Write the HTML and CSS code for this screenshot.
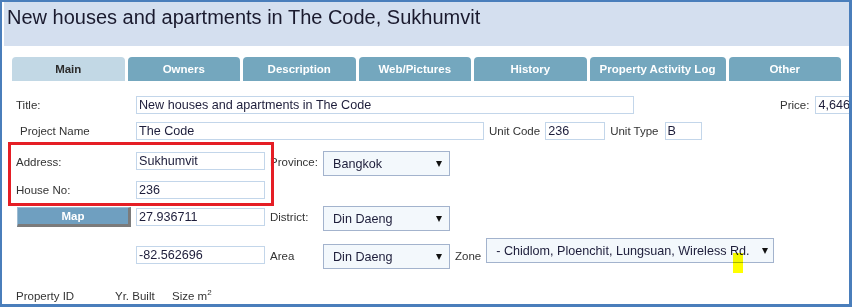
FILE: index.html
```html
<!DOCTYPE html>
<html lang="en">
<head>
    <meta charset="UTF-8">
    <title>New houses and apartments in The Code, Sukhumvit</title>
    <link rel="stylesheet" href="styles.css">
</head>
<body>
    <div class="frame">
        <header class="page-head">
            <h1>New houses and apartments in The Code, Sukhumvit</h1>
        </header>

        <nav class="tabs">
            <div class="tab active">Main</div>
            <div class="tab">Owners</div>
            <div class="tab">Description</div>
            <div class="tab">Web/Pictures</div>
            <div class="tab">History</div>
            <div class="tab wide">Property Activity Log</div>
            <div class="tab">Other</div>
        </nav>

        <section class="form">
            <div class="row row-title">
                <span class="label">Title:</span>
                <input class="field title-field" type="text" value="New houses and apartments in The Code">
                <span class="price-label">Price:</span>
                <input class="field price-field" type="text" value="4,646,000">
            </div>

            <div class="row row-project">
                <span class="label project-label">Project Name</span>
                <input class="field project-field" type="text" value="The Code">
                <span class="inline-label">Unit Code</span>
                <input class="field unit-code" type="text" value="236">
                <span class="inline-label unit-type-label">Unit Type</span>
                <input class="field unit-type" type="text" value="B">
            </div>

            <div class="row row-address">
                <span class="label">Address:</span>
                <input class="field short-field" type="text" value="Sukhumvit">
                <span class="side-label">Province:</span>
                <div class="select"><span>Bangkok</span><i class="arrow"></i></div>
            </div>

            <div class="row row-house">
                <span class="label">House No:</span>
                <input class="field short-field" type="text" value="236">
            </div>

            <div class="row row-map">
                <button class="map-btn">Map</button>
                <input class="field short-field" type="text" value="27.936711">
                <span class="side-label">District:</span>
                <div class="select"><span>Din Daeng</span><i class="arrow"></i></div>
            </div>

            <div class="row row-area">
                <span class="label"></span>
                <input class="field short-field" type="text" value="-82.562696">
                <span class="side-label">Area</span>
                <div class="select"><span>Din Daeng</span><i class="arrow"></i></div>
                <span class="zone-label">Zone</span>
                <div class="select zone-select"><span>- Chidlom, Ploenchit, Lungsuan, Wireless Rd.</span><i class="arrow"></i></div>
            </div>

            <div class="row row-info">
                <span class="info-id">Property ID</span>
                <span class="info-built">Yr. Built</span>
                <span class="info-size">Size m<sup>2</sup></span>
            </div>
        </section>

        <div class="mark-box"></div>
        <div class="mark-yellow"></div>
    </div>
</body>
</html>
```

FILE: styles.css
```css
body {
    margin: 0;
    padding: 0;
    background-color: #ffffff;
    font-family: Arial, 'Liberation Sans', sans-serif;
}
.frame {
    position: relative;
    width: 852px;
    height: 307px;
    box-sizing: border-box;
    border: 2px solid #4a7ebb;
    border-right-width: 3px;
    border-bottom-width: 3px;
    overflow: hidden;
}
.page-head {
    margin-left: 2px;
    height: 44px;
    background-color: #d4dfef;
}
.page-head h1 {
    margin: 0;
    padding: 4px 0 0 3px;
    font-size: 20px;
    font-weight: normal;
    line-height: 23px;
    color: #1a1a2e;
}
.tabs {
    display: flex;
    gap: 3px;
    margin: 11px 0 0 10px;
}
.tab {
    flex-shrink: 0;
    width: 112.5px;
    height: 24px;
    line-height: 24px;
    text-align: center;
    font-size: 11.5px;
    font-weight: bold;
    color: #ffffff;
    background-color: #74a7be;
    border-radius: 4px 4px 0 0;
}
.tab.active {
    background-color: #c2d8e5;
    color: #2b2b2b;
}
.tab.wide {
    width: 136px;
}
.form {
    padding-left: 14px;
}
.row {
    display: flex;
    align-items: flex-start;
    white-space: nowrap;
}
.label,
.inline-label,
.side-label,
.price-label,
.zone-label,
.row-info span {
    flex-shrink: 0;
    font-size: 11.5px;
    color: #333333;
    line-height: 18px;
}
.label {
    width: 120px;
}
.field {
    flex-shrink: 0;
    box-sizing: border-box;
    height: 18px;
    margin: 0;
    padding: 0 2px;
    border: 1px solid #c3d6ea;
    font-family: Arial, 'Liberation Sans', sans-serif;
    font-size: 12.6px;
    color: #1d1d3a;
    background-color: #ffffff;
    outline: none;
}
.select {
    flex-shrink: 0;
    box-sizing: border-box;
    width: 127px;
    height: 25px;
    display: flex;
    align-items: center;
    justify-content: space-between;
    padding: 0 7px 0 9px;
    border: 1px solid #a3b3cd;
    background-color: #f3f8fc;
    font-size: 12.6px;
    color: #1d1d3a;
}
.arrow {
    width: 0;
    height: 0;
    border-left: 3.5px solid transparent;
    border-right: 3.5px solid transparent;
    border-top: 6px solid #111111;
}

/* row 1 */
.row-title {
    margin-top: 15px;
}
.title-field {
    width: 498px;
}
.price-label {
    margin: 0 6px 0 146px;
}
.price-field {
    width: 90px;
}

/* row 2 */
.row-project {
    margin-top: 8px;
}
.project-label {
    box-sizing: border-box;
    padding-left: 4px;
}
.project-field {
    width: 348px;
}
.inline-label {
    margin: 0 5px;
}
.unit-type-label {
    margin-right: 6px;
}
.unit-code {
    width: 60px;
}
.unit-type {
    width: 37px;
}

/* address block */
.short-field {
    width: 129px;
}
.side-label {
    width: 58px;
    box-sizing: border-box;
    padding-left: 5px;
    line-height: 22px;
}
.row-address {
    margin-top: 11px;
}
.row-address .label,
.row-address .field {
    margin-top: 1px;
}
.row-address .label {
    line-height: 20px;
}
.row-house {
    margin-top: 5px;
}
.row-map {
    margin-top: 7px;
}
.row-map .field {
    margin-top: 2px;
}
.map-btn {
    flex-shrink: 0;
    box-sizing: border-box;
    width: 114px;
    height: 20px;
    margin: 1px 5px 0 1px;
    padding: 0;
    background-color: #6f9fc0;
    border: 1px solid #9dbbd2;
    border-right: 3px solid #7b7b7b;
    border-bottom: 3px solid #7b7b7b;
    color: #ffffff;
    font-family: Arial, 'Liberation Sans', sans-serif;
    font-size: 11.5px;
    font-weight: bold;
}
.row-area {
    margin-top: 7px;
}
.row-area .field {
    margin-top: 8px;
}
.row-area .side-label {
    margin-top: 7px;
}
.row-area .select {
    margin-top: 6px;
}
.row-area .zone-select {
    width: 288px;
    margin-top: 0;
    padding-right: 5px;
}
.zone-label {
    margin: 9px 5px 0 5px;
}

/* bottom labels */
.row-info {
    margin-top: 20px;
}
.row-info span {
    line-height: 14px;
}
.info-id {
    width: 99px;
}
.info-built {
    width: 57px;
}
.info-size sup {
    font-size: 8px;
    line-height: 0;
}

/* highlight marks laid over the form */
.mark-box {
    position: absolute;
    left: 6px;
    top: 140px;
    width: 266px;
    height: 64px;
    box-sizing: border-box;
    border: 3px solid #e51e25;
}
.mark-yellow {
    position: absolute;
    left: 731px;
    top: 251px;
    width: 10px;
    height: 20px;
    background-color: #ffff00;
    mix-blend-mode: multiply;
}
```
